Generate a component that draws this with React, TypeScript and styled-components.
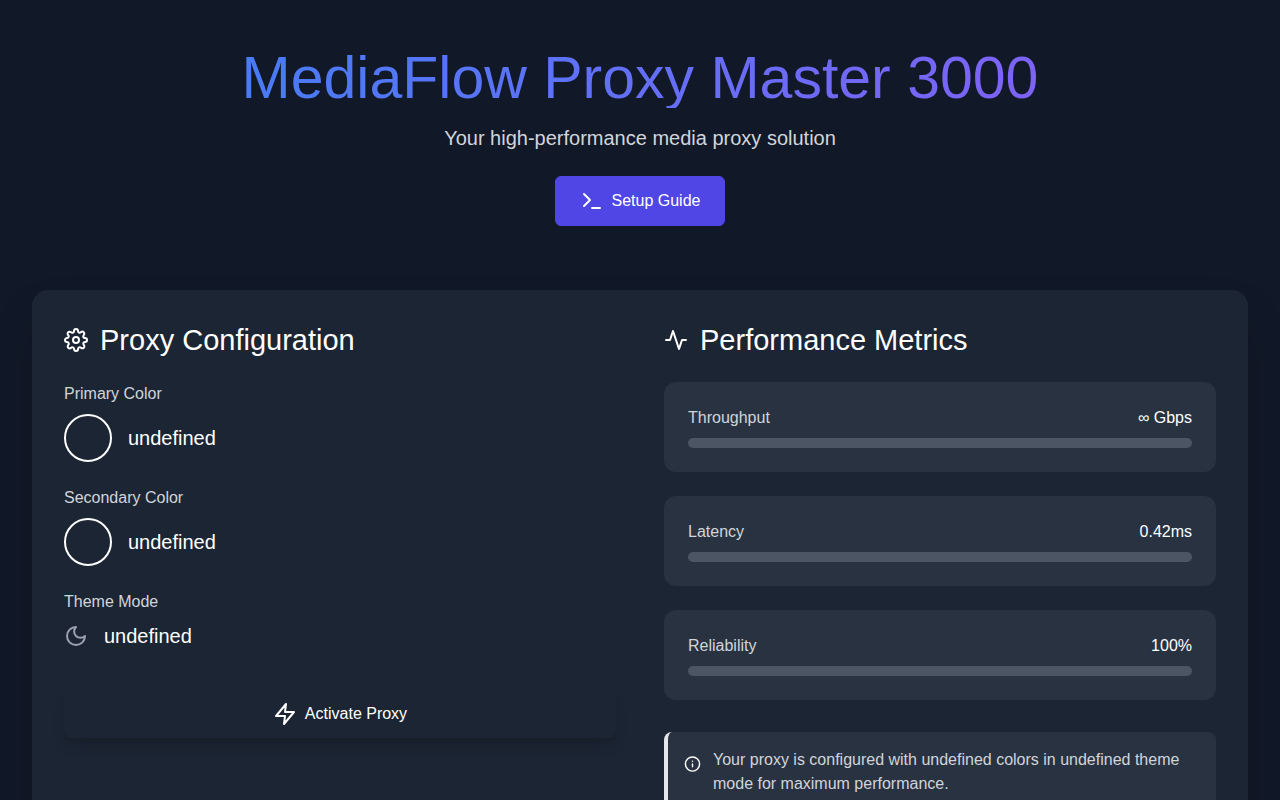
import React from "react";
import styled, { createGlobalStyle } from "styled-components";
import { FiActivity, FiInfo, FiSettings, FiTerminal, FiZap } from "react-icons/fi";

const GlobalStyle = createGlobalStyle`
  *, *::before, *::after { box-sizing: border-box; }
  body {
    margin: 0;
    background: #111827;
    color: #ffffff;
    font-family: "Liberation Sans", Arial, sans-serif;
    font-size: 16px;
    line-height: 24px;
  }
  h1, h2, p, dl, dt, dd { margin: 0; font-weight: 400; }
  button { font: inherit; color: inherit; cursor: pointer; }
  svg { flex: none; display: block; }
`;

const Page = styled.div`
  min-height: 100vh;
  padding: 48px 32px;
`;

const Header = styled.header`
  display: flex;
  flex-direction: column;
  align-items: center;
  text-align: center;
  margin-bottom: 64px;
`;

const Title = styled.h1`
  font-size: 59px;
  line-height: 60px;
  margin-bottom: 16px;
  color: transparent;
  background: linear-gradient(to right, #3b82f6, #8b5cf6);
  background-clip: text;
  -webkit-background-clip: text;
  align-self: stretch;
`;

const Subtitle = styled.p`
  font-size: 20px;
  line-height: 28px;
  color: #d1d5db;
  margin-bottom: 24px;
`;

const GuideButton = styled.button`
  display: inline-flex;
  align-items: center;
  gap: 8px;
  padding: 12px 24px;
  border: 1px solid #4f46e5;
  border-radius: 6px;
  background: #4f46e5;
`;

const Panel = styled.main`
  display: grid;
  grid-template-columns: repeat(2, minmax(0, 1fr));
  gap: 48px;
  padding: 32px;
  border-radius: 16px;
  background: #1c2533;
  box-shadow: 0 25px 50px -12px rgba(0, 0, 0, 0.25);
`;

const Heading = styled.h2`
  display: flex;
  align-items: center;
  gap: 12px;
  font-size: 29px;
  line-height: 36px;
  margin-bottom: 24px;
`;

const Settings = styled.dl`
  display: grid;
  gap: 24px;
  margin-bottom: 40px;
`;

const SettingLabel = styled.dt`
  color: #d1d5db;
  margin-bottom: 8px;
`;

const SettingValue = styled.dd`
  display: flex;
  align-items: center;
  gap: 16px;
  font-size: 20px;
  line-height: 28px;
`;

const Swatch = styled.span`
  width: 48px;
  height: 48px;
  border: 2px solid #ffffff;
  border-radius: 50%;
`;

const ActivateButton = styled.button`
  display: flex;
  align-items: center;
  justify-content: center;
  gap: 8px;
  width: 100%;
  padding: 12px 24px;
  border: 0;
  border-radius: 8px;
  background: transparent;
  box-shadow: 0 4px 6px -1px rgba(0, 0, 0, 0.1), 0 10px 15px -3px rgba(0, 0, 0, 0.1);
`;

const Metrics = styled.div`
  display: grid;
  gap: 24px;
  margin-bottom: 32px;
`;

const MetricCard = styled.div`
  padding: 24px;
  border-radius: 12px;
  background: #293241;
`;

const MetricRow = styled.div`
  display: flex;
  justify-content: space-between;
  margin-bottom: 8px;
`;

const MetricName = styled.span`
  color: #d1d5db;
`;

const Track = styled.div`
  height: 10px;
  border-radius: 5px;
  background: #4b5563;
`;

const Notice = styled.div`
  display: flex;
  align-items: flex-start;
  gap: 12px;
  padding: 16px;
  border-left: 4px solid #e5e7eb;
  border-radius: 8px;
  background: #293241;
  color: #d1d5db;

  svg {
    width: 17px;
    height: 24px;
    margin-top: 4px;
    color: #ffffff;
  }
`;

const MoonIcon = () => (
  <svg width="24" height="24" viewBox="0 0 24 24" fill="none" stroke="#9ca3af" strokeWidth="2" strokeLinecap="round" strokeLinejoin="round" aria-hidden="true">
    <path d="M12 3a6 6 0 0 0 9 9 9 9 0 1 1-9-9Z" />
  </svg>
);

const metrics = [
  { name: "Throughput", value: "∞ Gbps" },
  { name: "Latency", value: "0.42ms" },
  { name: "Reliability", value: "100%" },
];

export default function App() {
  return (
    <>
      <GlobalStyle />
      <Page>
        <Header>
          <Title>MediaFlow Proxy Master 3000</Title>
          <Subtitle>Your high-performance media proxy solution</Subtitle>
          <GuideButton type="button">
            <FiTerminal size={24} />
            Setup Guide
          </GuideButton>
        </Header>
        <Panel>
          <section>
            <Heading>
              <FiSettings size={24} />
              Proxy Configuration
            </Heading>
            <Settings>
              {["Primary Color", "Secondary Color"].map((label) => (
                <div key={label}>
                  <SettingLabel>{label}</SettingLabel>
                  <SettingValue>
                    <Swatch />
                    undefined
                  </SettingValue>
                </div>
              ))}
              <div>
                <SettingLabel>Theme Mode</SettingLabel>
                <SettingValue>
                  <MoonIcon />
                  undefined
                </SettingValue>
              </div>
            </Settings>
            <ActivateButton type="button">
              <FiZap size={24} />
              Activate Proxy
            </ActivateButton>
          </section>
          <section>
            <Heading>
              <FiActivity size={24} />
              Performance Metrics
            </Heading>
            <Metrics>
              {metrics.map(({ name, value }) => (
                <MetricCard key={name}>
                  <MetricRow>
                    <MetricName>{name}</MetricName>
                    <span>{value}</span>
                  </MetricRow>
                  <Track />
                </MetricCard>
              ))}
            </Metrics>
            <Notice>
              <FiInfo />
              <p>
                Your proxy is configured with undefined colors in undefined theme mode for maximum
                performance.
              </p>
            </Notice>
          </section>
        </Panel>
      </Page>
    </>
  );
}
